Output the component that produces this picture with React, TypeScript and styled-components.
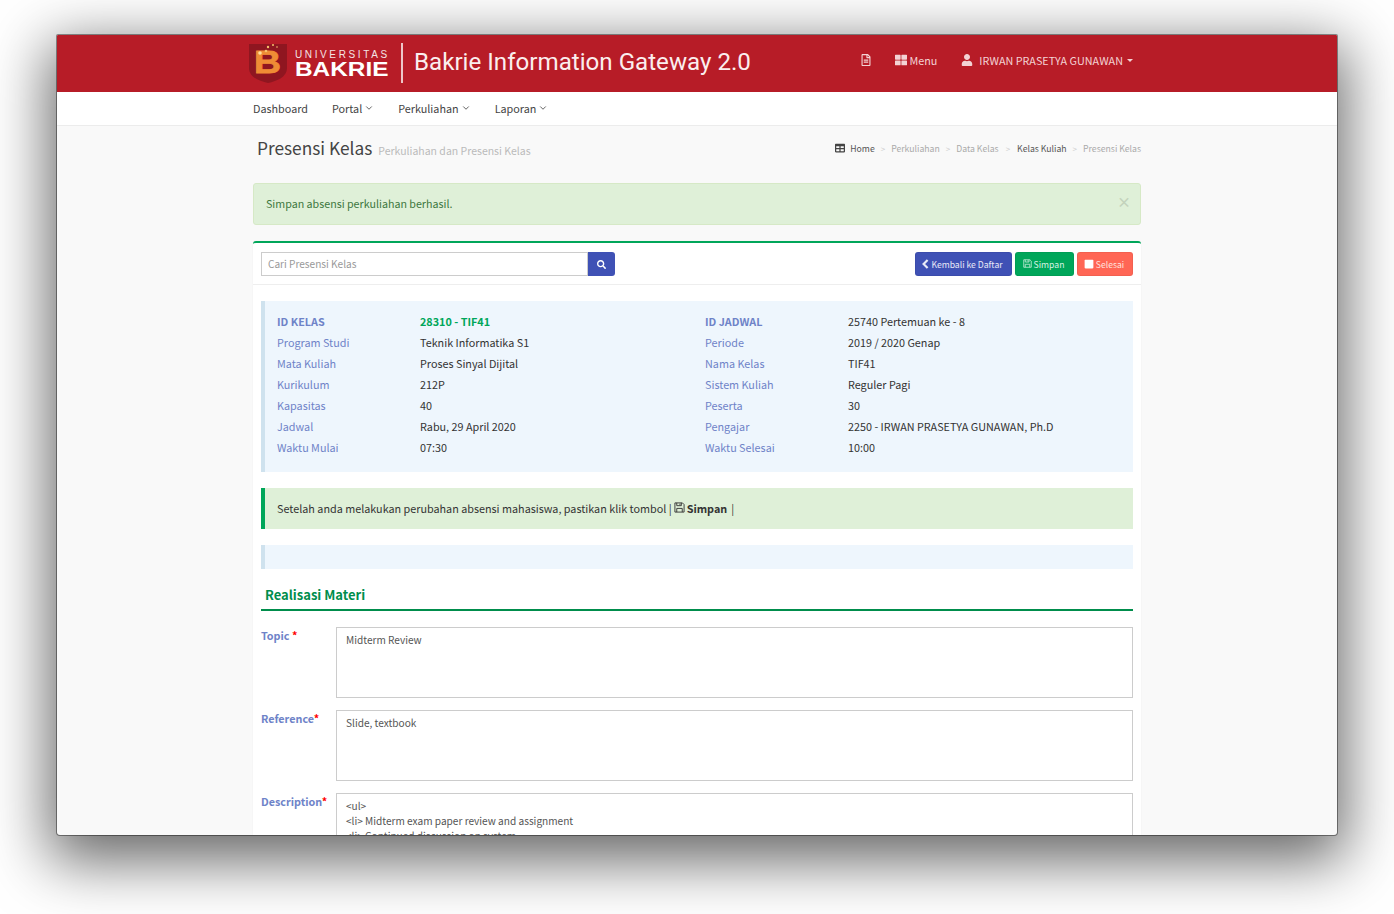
import React from "react";
import styled, { createGlobalStyle } from "styled-components";
import { ChevronDown } from "lucide-react";
import { FaRegFileAlt, FaSearch, FaStop, FaTable, FaThLarge, FaUser } from "react-icons/fa";

const Global = createGlobalStyle`
  html, body { margin: 0; padding: 0; background: #fff; }
  body { width: 1394px; height: 914px; overflow: hidden; font-family: "Noto Sans CJK SC", "Noto Sans", sans-serif; color: #333; }
  * { box-sizing: border-box; }
`;
const Desk = styled.div`padding: 35px 57px 79px;`;
const Win = styled.div`
  width: 1280px; height: 800px; overflow: hidden; background: #f9f9f9; border-radius: 1px 1px 3px 3px;
  box-shadow: 0 0 0 1px rgba(0,0,0,.4), 0 18px 60px 8px rgba(0,0,0,.6);
`;
const Container = styled.div`width: 888px; margin: 0 auto;`;
const Header = styled.header`height: 57px; background: #b71c27; color: #f3d2d4;`;
const HeaderIn = styled(Container)`display: flex; align-items: center; height: 100%;`;
const Brand = styled.div`display: flex; align-items: center; margin-left: -5px; height: 100%; padding-bottom: 1px;`;
const Word = styled.div`display: flex; flex-direction: column; margin-left: 7px; width: 93px; font-family: "Liberation Sans", Arial, sans-serif; color: #f4e4e4; gap: 1px;`;
const Uni = styled.span`font-size: 10px; line-height: 11px; letter-spacing: 2.62px; white-space: nowrap;`;
const Bak = styled.span`font-size: 19.5px; line-height: 17px; font-weight: 700; white-space: nowrap; color: #fff; transform: scaleX(1.25); transform-origin: top left;`;
const Sep = styled.div`width: 2px; height: 40px; background: #eec6c8; margin: 0 11px 0 13px;`;
const Title = styled.div`font-family: Roboto, sans-serif; font-size: 24.15px; color: #fbeeee; white-space: nowrap; padding-bottom: 3px;`;
const HeaderRight = styled.div`margin-left: auto; display: flex; align-items: center; font-size: 10.8px; margin-right: 8px; padding-bottom: 8px;`;
const HItem = styled.div<{ $gap: number }>`display: flex; align-items: center; gap: 2px; margin-left: ${p => p.$gap}px; white-space: nowrap;`;
const Caret = styled.span`display: inline-block; border-top: 3px solid currentColor; border-left: 3.5px solid transparent; border-right: 3.5px solid transparent; margin-left: 2px; margin-top: 2px;`;

const Nav = styled.nav`height: 34px; background: #fff; border-bottom: 1px solid #ececec;`;
const NavIn = styled(Container)`display: flex; align-items: center; height: 100%; gap: 24px; font-size: 10.8px; color: #444; padding-bottom: 1px;`;
const NavItem = styled.span`display: flex; align-items: center; gap: 2px;`;

const PageHead = styled(Container)`display: flex; align-items: baseline; padding: 11px 0 0 4px; height: 57px;`;
const H1 = styled.h1`margin: 0; font-weight: 400; font-size: 17.3px; line-height: 22px; color: #444;`;
const Sub = styled.small`font-size: 10.5px; color: #bbb; margin-left: 6px;`;
const Crumbs = styled.div`margin-left: auto; display: flex; align-items: center; font-size: 8.7px; color: #aaa; transform: translateY(-2px);`;
const Crumb = styled.span<{ $dark?: boolean }>`color: ${p => (p.$dark ? "#555" : "#aaa")};`;
const Gt = styled.span<{ $wide?: boolean }>`margin: 0 ${p => (p.$wide ? 7 : 6)}px; color: #ccc; font-size: 8px;`;

const Alert = styled(Container)`
  height: 42px; background: #dff0d8; border: 1px solid #d6e9c6; border-radius: 3px; color: #3c763d; font-size: 10.7px;
  display: flex; align-items: center; justify-content: space-between; padding: 0 12px 1px;
`;
const Close = styled.span`color: #c3d3bc; font-size: 14px; font-weight: 700; margin-top: -5px; margin-right: -3px;`;

const Panel = styled(Container)`margin-top: 16px; background: #fff; border-top: 2px solid #00a65a; border-radius: 3px 3px 0 0; box-shadow: 0 0 1px rgba(0,0,0,.12); padding-bottom: 40px;`;
const Toolbar = styled.div`height: 42px; padding: 9px 8px 0; display: flex; justify-content: space-between; border-bottom: 1px solid #eee;`;
const Search = styled.div`display: flex; width: 354px; height: 24px;`;
const SearchInput = styled.div`flex: 1; border: 1px solid #ccc; font-size: 10.1px; color: #999; line-height: 22px; padding-left: 6px;`;
const SearchBtn = styled.div`width: 27px; background: #3f51b5; border-radius: 0 3px 3px 0; color: #fff; display: flex; align-items: center; justify-content: center; font-size: 9px;`;
const Actions = styled.div`display: flex; gap: 3px;`;
const Btn = styled.div<{ $bg: string; $w: number; $c?: string }>`
  height: 24px; width: ${p => p.$w}px; background: ${p => p.$bg}; border-radius: 3px; color: ${p => p.$c ?? "#e9eaf7"}; font-size: 8.65px; white-space: nowrap;
  display: flex; align-items: center; justify-content: center; gap: 2px; border: 1px solid rgba(0,0,0,.05); padding: 0 2px 1px 0;
`;
const Body = styled.div`padding: 16px 8px 0;`;
const Info = styled.div`
  height: 171px; background: #eef6fd; border-left: 4px solid #cfe2ee; padding: 9px 12px;
  display: grid; grid-template-columns: 143px 285px 143px 1fr; grid-auto-rows: 21px; align-items: center; font-size: 10.8px; color: #333;
`;
const Lab = styled.div<{ $b?: boolean }>`color: #6e83c8; font-weight: ${p => (p.$b ? 700 : 400)};`;
const Val = styled.div<{ $g?: boolean }>`color: ${p => (p.$g ? "#00a65a" : "#333")}; font-weight: ${p => (p.$g ? 700 : 400)};`;
const Callout = styled.div`
  margin-top: 16px; height: 41px; background: #dff0d8; border-left: 4px solid #00a65a; padding: 0 0 2px 12px; font-size: 10.8px; color: #333;
  display: flex; align-items: center; gap: 2px; white-space: pre;
`;
const Strong = styled.b`font-weight: 700; margin-right: 2px;`;
const Blank = styled.div`margin-top: 16px; height: 24px; background: #eef6fd; border-left: 4px solid #cfe2ee;`;
const H3 = styled.h3`
  margin: 16px 0 16px; height: 26px; border-bottom: 2px solid #008d4c; color: #008d4c; font-size: 13px; font-weight: 700; line-height: 20px; padding-left: 4px;
`;
const FormRow = styled.div`display: grid; grid-template-columns: 75px 1fr; & + & { margin-top: 12px; }`;
const FLabel = styled.label`color: #6e83c8; font-size: 10.8px; font-weight: 700; line-height: 16px;`;
const Req = styled.span`color: #f00;`;
const Area = styled.div`height: 71px; border: 1px solid #ccc; padding: 4px 9px; font-size: 10.1px; line-height: 15px; color: #555; white-space: pre;`;

const rows: [string, string, string, string][] = [
  ["Program Studi", "Teknik Informatika S1", "Periode", "2019 / 2020 Genap"],
  ["Mata Kuliah", "Proses Sinyal Dijital", "Nama Kelas", "TIF41"],
  ["Kurikulum", "212P", "Sistem Kuliah", "Reguler Pagi"],
  ["Kapasitas", "40", "Peserta", "30"],
  ["Jadwal", "Rabu, 29 April 2020", "Pengajar", "2250 - IRWAN PRASETYA GUNAWAN, Ph.D"],
  ["Waktu Mulai", "07:30", "Waktu Selesai", "10:00"],
];

const Logo = () => (
  <svg width="40" height="42" viewBox="0 0 40 42" aria-hidden="true">
    <path d="M1 2h38v24c0 9-10 13-19 15C11 39 1 35 1 26z" fill="#8f1620" />
    <text x="6" y="31" textLength="27" lengthAdjust="spacingAndGlyphs" fontFamily="Liberation Sans, sans-serif" fontWeight="700" fontSize="32" fill="#ef8c35" stroke="#ef8c35" strokeWidth=".8">B</text>
    <circle cx="12" cy="11" r="1.8" fill="#ffe0a0" />
    <circle cx="18" cy="9" r="1.3" fill="#f6c26b" />
    <circle cx="20" cy="5" r="1.2" fill="#f6c26b" />
    <circle cx="25" cy="3" r="1" fill="#f6c26b" />
    <circle cx="29" cy="5" r=".8" fill="#f6c26b" />
  </svg>
);

const Floppy = ({ size }: { size: number }) => (
  <svg width={size} height={size} viewBox="0 0 12 12" fill="none" stroke="currentColor" strokeWidth="1" aria-hidden="true">
    <path d="M1 1h8.2L11 2.8V11H1z" />
    <path d="M3 1v3h5V1" />
    <path d="M3 11V7h6v4" />
    <path d="M6.5 1.8v1.4" />
  </svg>
);

const BackChevron = () => (
  <svg width="7" height="10" viewBox="0 0 7 10" fill="none" stroke="currentColor" strokeWidth="2.2" aria-hidden="true">
    <path d="M5.6 1 1.6 5l4 4" />
  </svg>
);

export default function App() {
  return (
    <Desk>
      <Global />
      <Win>
        <Header>
          <HeaderIn>
            <Brand>
              <Logo />
              <Word><Uni>UNIVERSITAS</Uni><Bak>BAKRIE</Bak></Word>
              <Sep />
              <Title>Bakrie Information Gateway 2.0</Title>
            </Brand>
            <HeaderRight>
              <HItem $gap={0}><FaRegFileAlt size={12} /></HItem>
              <HItem $gap={23}><FaThLarge size={12} /> Menu</HItem>
              <HItem $gap={24}><FaUser size={12} style={{ marginRight: 4 }} /> IRWAN PRASETYA GUNAWAN <Caret /></HItem>
            </HeaderRight>
          </HeaderIn>
        </Header>
        <Nav>
          <NavIn>
            <NavItem>Dashboard</NavItem>
            <NavItem>Portal <ChevronDown size={10} /></NavItem>
            <NavItem>Perkuliahan <ChevronDown size={10} /></NavItem>
            <NavItem>Laporan <ChevronDown size={10} /></NavItem>
          </NavIn>
        </Nav>
        <PageHead>
          <H1>Presensi Kelas</H1>
          <Sub>Perkuliahan dan Presensi Kelas</Sub>
          <Crumbs>
            <FaTable size={10} color="#444" style={{ marginRight: 5 }} />
            <Crumb $dark>Home</Crumb><Gt>&gt;</Gt>
            <Crumb>Perkuliahan</Crumb><Gt>&gt;</Gt>
            <Crumb>Data Kelas</Crumb><Gt $wide>&gt;</Gt>
            <Crumb $dark>Kelas Kuliah</Crumb><Gt>&gt;</Gt>
            <Crumb>Presensi Kelas</Crumb>
          </Crumbs>
        </PageHead>
        <Alert>
          <span>Simpan absensi perkuliahan berhasil.</span>
          <Close>×</Close>
        </Alert>
        <Panel>
          <Toolbar>
            <Search>
              <SearchInput>Cari Presensi Kelas</SearchInput>
              <SearchBtn><FaSearch /></SearchBtn>
            </Search>
            <Actions>
              <Btn $bg="#3f51b5" $w={97}><BackChevron /> Kembali ke Daftar</Btn>
              <Btn $bg="#00a65a" $w={59} $c="#d5f2e3"><Floppy size={9} /> Simpan</Btn>
              <Btn $bg="#ff6655" $w={56} $c="#ffe3df"><FaStop size={10} color="#fff" /> Selesai</Btn>
            </Actions>
          </Toolbar>
          <Body>
            <Info>
              <Lab $b>ID KELAS</Lab><Val $g>28310 - TIF41</Val><Lab $b>ID JADWAL</Lab><Val>25740 Pertemuan ke - 8</Val>
              {rows.map(r => (
                <React.Fragment key={r[0]}>
                  <Lab>{r[0]}</Lab><Val>{r[1]}</Val><Lab>{r[2]}</Lab><Val>{r[3]}</Val>
                </React.Fragment>
              ))}
            </Info>
            <Callout>
              <span>Setelah anda melakukan perubahan absensi mahasiswa, pastikan klik tombol |</span>
              <Floppy size={11} />
              <Strong>Simpan</Strong>
              <span>|</span>
            </Callout>
            <Blank />
            <H3>Realisasi Materi</H3>
            <FormRow>
              <FLabel>Topic <Req>*</Req></FLabel>
              <Area>Midterm Review</Area>
            </FormRow>
            <FormRow>
              <FLabel>Reference<Req>*</Req></FLabel>
              <Area>Slide, textbook</Area>
            </FormRow>
            <FormRow>
              <FLabel>Description<Req>*</Req></FLabel>
              <Area>{"<ul>\n<li> Midterm exam paper review and assignment\n<li> Continued discussion on system"}</Area>
            </FormRow>
          </Body>
        </Panel>
      </Win>
    </Desk>
  );
}
